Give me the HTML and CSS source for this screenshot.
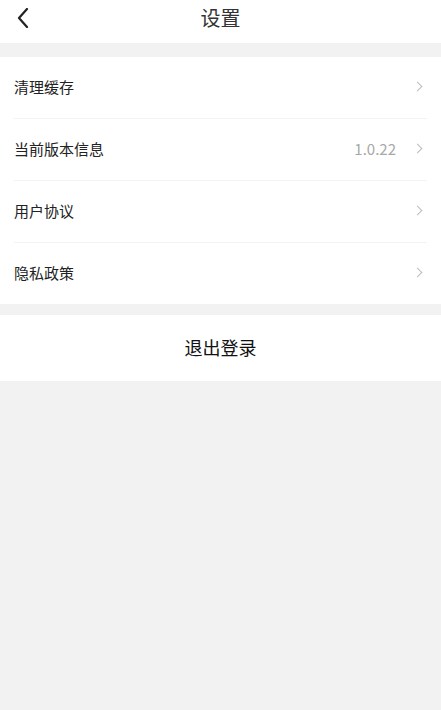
FILE: index.html
```html
<!DOCTYPE html>
<html lang="zh-CN">
<head>
    <meta charset="UTF-8">
    <meta name="viewport" content="width=device-width, initial-scale=1.0">
    <title>设置</title>
    <link rel="stylesheet" href="styles.css">
</head>
<body>

    <header class="nav-bar">
        <span class="nav-back">
            <svg width="12" height="20" viewBox="0 0 12 20">
                <path d="M10 1 L2 10 L10 19" fill="none" stroke="#222" stroke-width="2.2" stroke-linecap="round" stroke-linejoin="round"/>
            </svg>
        </span>
        <h1 class="nav-title">设置</h1>
    </header>

    <div class="gap"></div>

    <ul class="menu">
        <li class="menu-item">
            <span class="menu-label">清理缓存</span>
            <span class="menu-arrow"></span>
        </li>
        <li class="menu-item">
            <span class="menu-label">当前版本信息</span>
            <span class="menu-value">1.0.22</span>
            <span class="menu-arrow"></span>
        </li>
        <li class="menu-item">
            <span class="menu-label">用户协议</span>
            <span class="menu-arrow"></span>
        </li>
        <li class="menu-item">
            <span class="menu-label">隐私政策</span>
            <span class="menu-arrow"></span>
        </li>
    </ul>

    <div class="gap gap-small"></div>

    <button class="logout-btn">退出登录</button>

</body>
</html>
```

FILE: styles.css
```css
* {
    margin: 0;
    padding: 0;
    box-sizing: border-box;
    font-family: "Noto Sans CJK SC", "Noto Sans", sans-serif;
}

body {
    background: #f2f2f2;
    color: #333;
    font-size: 15px;
    min-height: 100vh;
}

.nav-bar {
    height: 43px;
    background: #fff;
    display: flex;
    align-items: center;
    justify-content: center;
    position: relative;
    padding-bottom: 8px;
}

.nav-back {
    position: absolute;
    left: 17px;
    top: 8px;
    display: flex;
}

.nav-title {
    font-size: 20px;
    font-weight: 400;
    color: #333;
    line-height: 1;
}

.gap {
    height: 14px;
}

.gap-small {
    height: 11px;
}

.menu {
    list-style: none;
    background: #fff;
}

.menu-item {
    height: 62px;
    margin: 0 14px;
    display: flex;
    align-items: center;
    border-bottom: 1px solid #f3f3f3;
    padding-right: 6px;
    padding-bottom: 2px;
}

.menu-item:last-child {
    border-bottom: none;
    height: 61px;
}

.menu-label {
    flex: 1;
    color: #222;
}

.menu-value {
    color: #a8a8a8;
    font-size: 15px;
    margin-right: 18px;
}

.menu-arrow {
    width: 7px;
    height: 7px;
    border-top: 1px solid #bcbcbc;
    border-right: 1px solid #bcbcbc;
    transform: rotate(45deg);
}

.logout-btn {
    display: block;
    width: 100%;
    height: 66px;
    background: #fff;
    border: none;
    font-size: 18px;
    color: #111;
    padding-bottom: 2px;
}
```
